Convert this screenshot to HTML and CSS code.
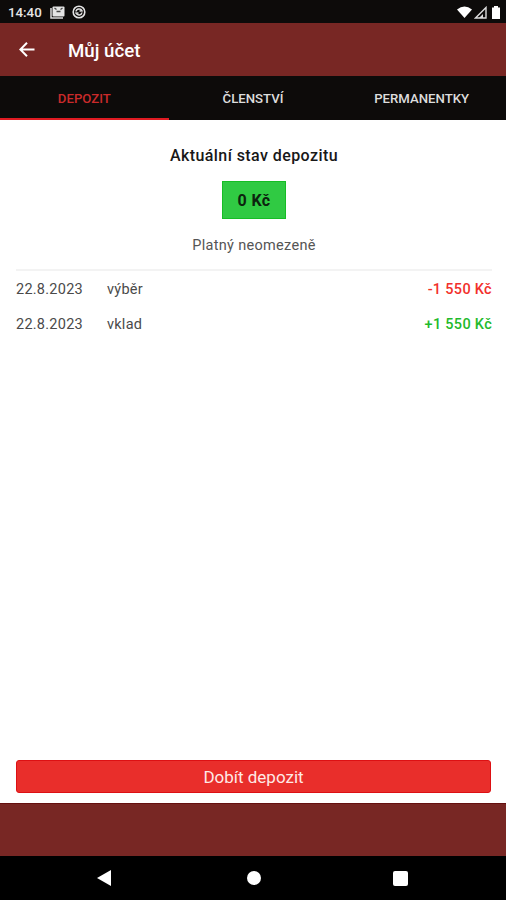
FILE: index.html
```html
<!DOCTYPE html>
<html lang="cs">
<head>
    <meta charset="UTF-8">
    <meta name="viewport" content="width=device-width, initial-scale=1.0">
    <title>Můj účet</title>
    <link rel="stylesheet" href="styles.css">
</head>
<body>
    <div class="status-bar">
        <span class="clock">14:40</span>
        <svg class="icon-news" width="15" height="13" viewBox="0 0 15 13">
            <path d="M1 2v10h12" fill="none" stroke="#ddd" stroke-width="1.5"/>
            <rect x="2.500" y="0.500" width="12" height="10" rx="1" fill="#e4e4e4"/>
            <path d="M4.500 2l2 1.500M12.500 2l-2 1.500M6.500 5.500h4" stroke="#444" stroke-width="1.300"/>
        </svg>
        <svg class="icon-sync" width="14" height="14" viewBox="0 0 14 14">
            <circle cx="7" cy="7" r="5.800" fill="none" stroke="#e4e4e4" stroke-width="1.600"/>
            <path d="M4 6.500c.4-3 4.800-3.400 6-.7L7.500 6M10 7.500c-.5 3-4.500 3.300-6 .7L6.500 8" fill="none" stroke="#e4e4e4" stroke-width="1.500"/>
        </svg>
        <div class="signals">
            <svg width="15" height="12" viewBox="0 0 15 12">
                <path d="M0 3.500Q7.500-2.500 15 3.500L7.500 12z" fill="#fff"/>
            </svg>
            <svg width="13" height="13" viewBox="0 0 13 13">
                <path d="M1.500 12H12V1.500z" fill="none" stroke="#ddd" stroke-width="1.400"/>
                <path d="M5 12l4-4v4z" fill="#ddd"/>
            </svg>
            <svg width="8" height="13" viewBox="0 0 8 13">
                <path d="M2 0h4v1.500h2V13H0V1.500h2z" fill="#fff"/>
            </svg>
        </div>
    </div>
    <header class="header">
        <svg width="16" height="16" viewBox="0 0 16 16">
            <path d="M15.500 7.500H1.500M8 .7L1.300 7.500L8 14.300" fill="none" stroke="#fff" stroke-width="2"/>
        </svg>
        <h1>Můj účet</h1>
    </header>
    <nav class="tabs">
        <div class="tab active">DEPOZIT</div>
        <div class="tab">ČLENSTVÍ</div>
        <div class="tab">PERMANENTKY</div>
    </nav>
    <main class="content">
        <h2>Aktuální stav depozitu</h2>
        <div class="balance">0 Kč</div>
        <p class="validity">Platný neomezeně</p>
        <div class="history">
            <div class="row">
                <span class="date">22.8.2023</span>
                <span>výběr</span>
                <span class="amount minus">-1 550 Kč</span>
            </div>
            <div class="row">
                <span class="date">22.8.2023</span>
                <span>vklad</span>
                <span class="amount plus">+1 550 Kč</span>
            </div>
        </div>
        <button class="btn">Dobít depozit</button>
    </main>
    <div class="footer"></div>
    <div class="nav-bar">
        <svg width="14" height="16" viewBox="0 0 14 16">
            <path d="M14 0v16L0 8z" fill="#fff"/>
        </svg>
        <div class="home"></div>
        <div class="recent"></div>
    </div>
</body>
</html>
```
FILE: styles.css
```css
* {
    margin: 0;
    padding: 0;
    box-sizing: border-box;
}
body {
    height: 900px;
    display: flex;
    flex-direction: column;
    font-family: Roboto, sans-serif;
    background-color: #fff;
    overflow: hidden;
}
.status-bar {
    height: 23px;
    display: flex;
    align-items: center;
    padding: 1px 6px 0 8px;
    background-color: #0d0b0a;
    color: #e6e6e6;
}
.clock {
    width: 42px;
    padding-top: 1px;
    font-size: 13.3px;
    font-weight: 500;
    line-height: 22px;
}
.icon-sync {
    margin-left: 7px;
}
.signals {
    display: flex;
    align-items: center;
    gap: 2px;
    margin-left: auto;
}
.signals svg:last-child {
    margin-left: 3px;
}
.header {
    height: 53px;
    display: flex;
    align-items: center;
    padding-left: 19px;
    background-color: #782724;
    color: #fff;
}
.header h1 {
    margin-left: 33px;
    padding-top: 2px;
    font-size: 18.7px;
    font-weight: 500;
}
.tabs {
    height: 44px;
    display: grid;
    grid-template-columns: repeat(3, 1fr);
    background-color: #0d0b0a;
}
.tab {
    height: 44px;
    padding-top: 2px;
    border-bottom: 2px solid transparent;
    text-align: center;
    font-size: 13.2px;
    font-weight: 500;
    line-height: 42px;
    color: #ddd;
}
.tab.active {
    color: #c92a2a;
    border-color: #e01b22;
}
.content {
    height: 683px;
    display: flex;
    flex-direction: column;
    padding: 0 14px 10px 16px;
}
.content h2 {
    margin-top: 26px;
    text-align: center;
    font-size: 16px;
    font-weight: 500;
    line-height: 20px;
    letter-spacing: 0.42px;
    color: #181818;
}
.balance {
    width: 64px;
    height: 38px;
    margin: 15px auto 0;
    border: 1px solid #16bd25;
    background-color: #30ca43;
    text-align: center;
    font-size: 16px;
    font-weight: 700;
    line-height: 38px;
    letter-spacing: 0.4px;
    color: #0c240e;
}
.validity {
    margin-top: 17px;
    text-align: center;
    font-size: 14.5px;
    line-height: 20px;
    letter-spacing: 0.3px;
    color: #555;
}
.history {
    margin-top: 13px;
    border-top: 2px solid #f3f3f3;
}
.row {
    height: 35px;
    display: flex;
    align-items: center;
    padding-top: 1px;
    font-size: 14.5px;
    letter-spacing: 0.25px;
    color: #4a4a4a;
}
.date {
    width: 91px;
}
.amount {
    margin-left: auto;
    font-weight: 500;
    letter-spacing: 0.3px;
}
.minus {
    color: #f2302c;
}
.plus {
    color: #1fba2c;
}
.btn {
    height: 33px;
    margin: auto 1px 0 0;
    padding-top: 1px;
    border: 1px solid #dd1013;
    border-radius: 3px;
    background-color: #e92e2b;
    font-family: inherit;
    font-size: 17px;
    color: #ffe9e6;
}
.footer {
    height: 53px;
    border-top: 1px solid #650f0f;
    background-color: #782724;
}
.nav-bar {
    height: 44px;
    display: flex;
    align-items: center;
    padding-left: 97px;
    background-color: #000;
}
.home {
    width: 14px;
    height: 14px;
    margin-left: 136px;
    border-radius: 50%;
    background-color: #fff;
}
.recent {
    width: 15px;
    height: 15px;
    margin-left: 132px;
    border-radius: 2px;
    background-color: #fff;
}
```
